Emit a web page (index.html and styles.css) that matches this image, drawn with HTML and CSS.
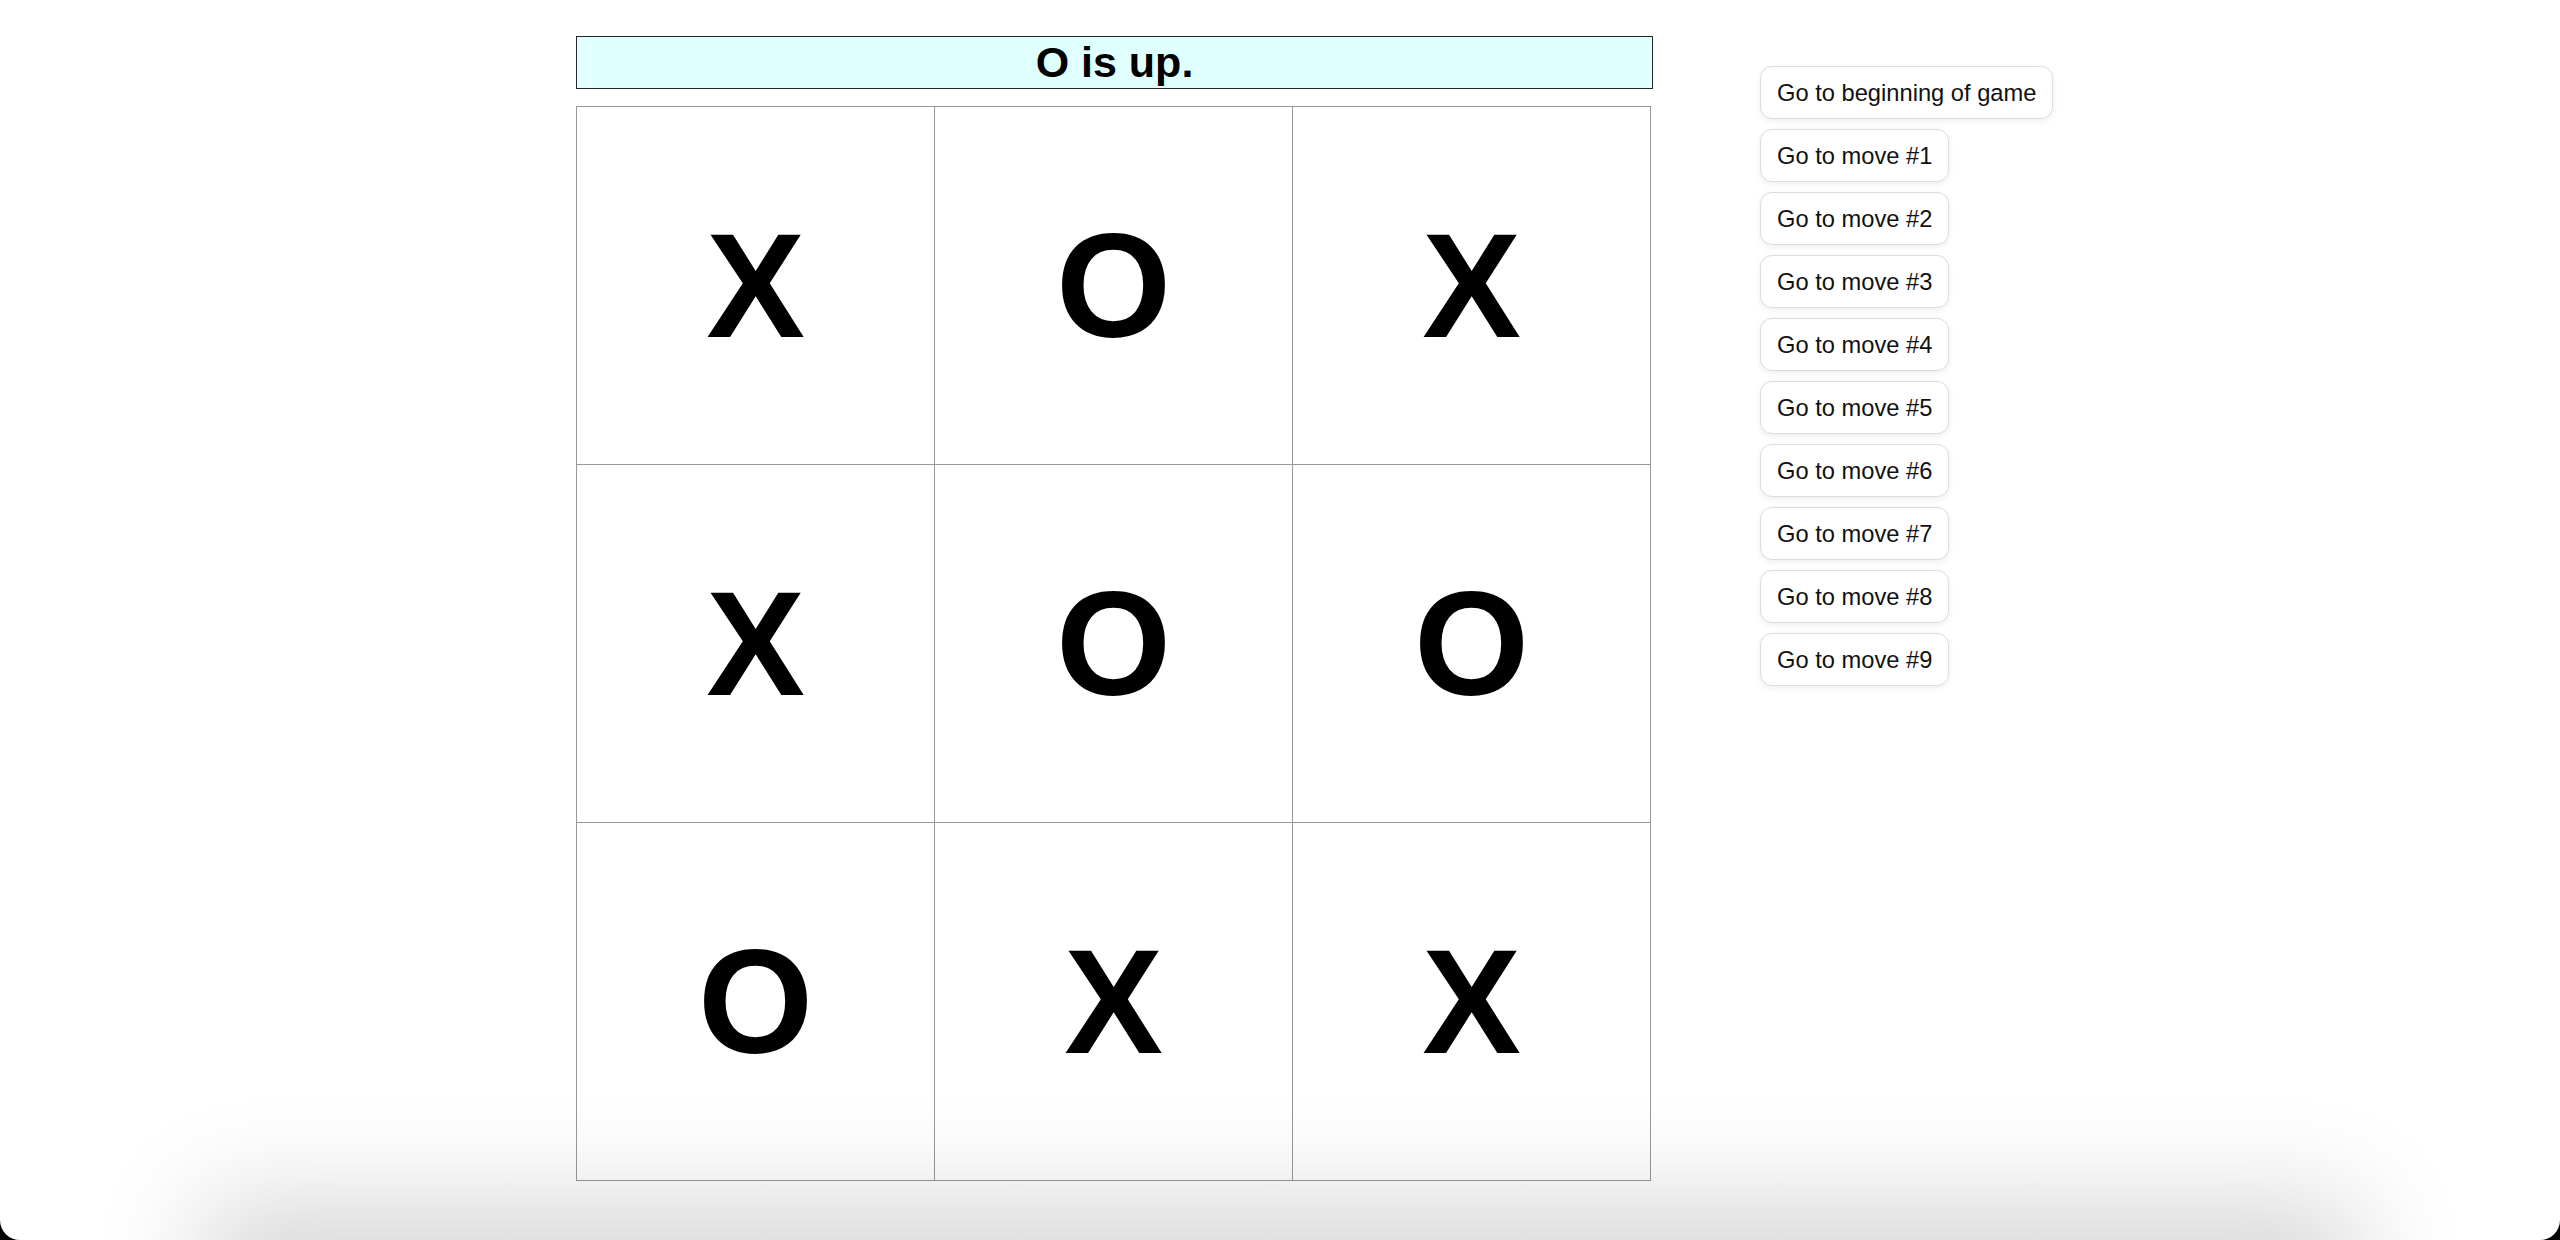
FILE: index.html
```html
<!DOCTYPE html>
<html lang="en">
<head>
<meta charset="utf-8">
<title>Tic-Tac-Toe</title>
<link rel="stylesheet" href="styles.css">
</head>
<body>
<div class="game">
  <div class="game-board">
    <div class="status">O is up.</div>
    <div class="board">
      <button class="square">X</button>
      <button class="square">O</button>
      <button class="square">X</button>
      <button class="square">X</button>
      <button class="square">O</button>
      <button class="square">O</button>
      <button class="square">O</button>
      <button class="square">X</button>
      <button class="square">X</button>
    </div>
  </div>
  <ol class="moves">
    <li><button class="move">Go to beginning of game</button></li>
    <li><button class="move">Go to move #1</button></li>
    <li><button class="move">Go to move #2</button></li>
    <li><button class="move">Go to move #3</button></li>
    <li><button class="move">Go to move #4</button></li>
    <li><button class="move">Go to move #5</button></li>
    <li><button class="move">Go to move #6</button></li>
    <li><button class="move">Go to move #7</button></li>
    <li><button class="move">Go to move #8</button></li>
    <li><button class="move">Go to move #9</button></li>
  </ol>
</div>
<div class="window-shadow"></div>
<div class="window-frame"></div>
</body>
</html>
```

FILE: styles.css
```css
html, body {
  margin: 0;
  padding: 0;
  background: #fff;
  height: 100%;
  overflow: hidden;
}

body {
  font-family: "Liberation Sans", Arial, Helvetica, sans-serif;
  color: #000;
}

.game {
  display: flex;
  align-items: flex-start;
  gap: 107px;
  padding: 36px 0 0 576px;
}

.game-board {
  display: flex;
  flex-direction: column;
  gap: 17px;
  width: 1077px;
}

.status {
  border: 1px solid #262626;
  background: #e0ffff;
  font-size: 43px;
  font-weight: bold;
  line-height: 51px;
  text-align: center;
}

.board {
  display: grid;
  grid-template-columns: repeat(3, 358px);
  grid-template-rows: repeat(3, 358px);
  border-top: 1px solid #999;
  border-left: 1px solid #999;
  width: max-content;
}

.square {
  border: none;
  border-right: 1px solid #999;
  border-bottom: 1px solid #999;
  background: #fff;
  padding: 0;
  margin: 0;
  font-family: "Liberation Sans", Arial, Helvetica, sans-serif;
  font-size: 148px;
  font-weight: bold;
  line-height: 1;
  color: #000;
  display: flex;
  align-items: center;
  justify-content: center;
}

.moves {
  list-style: none;
  margin: 30px 0 0;
  padding: 0;
  display: flex;
  flex-direction: column;
  align-items: flex-start;
  gap: 10px;
}

.move {
  font-family: "Liberation Sans", Arial, Helvetica, sans-serif;
  font-size: 23.7px;
  line-height: 27px;
  color: #111;
  background: #fff;
  border: 1px solid #dcdcdc;
  border-radius: 12px;
  padding: 13px 16px 11px;
  box-shadow: 0 2px 6px rgba(0, 0, 0, 0.07);
}

.window-shadow {
  position: fixed;
  left: 240px;
  right: 240px;
  top: 100%;
  height: 80px;
  box-shadow: 0 0 110px 40px rgba(0, 0, 0, 0.16);
  pointer-events: none;
}

.window-frame {
  position: fixed;
  inset: 0;
  border-radius: 0 0 20px 20px;
  box-shadow: 0 0 0 40px #000;
  pointer-events: none;
}
```
